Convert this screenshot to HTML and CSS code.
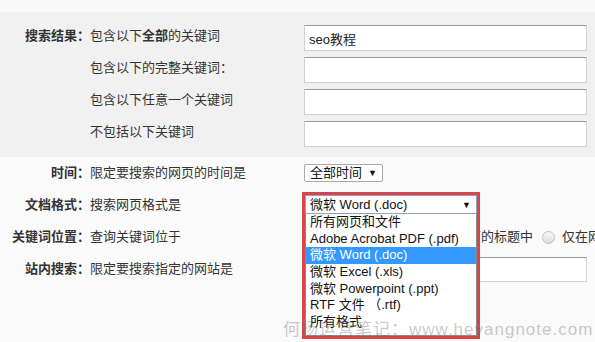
FILE: index.html
```html
<!DOCTYPE html>
<html lang="zh-CN">
<head>
    <meta charset="UTF-8">
    <meta name="viewport" content="width=device-width, initial-scale=1.0">
    <title>高级搜索</title>
    <link rel="stylesheet" href="styles.css">
</head>
<body>
    <div class="page">
        <div class="band"></div>

        <!-- keyword rows -->
        <div class="group">
            <div class="row">
                <div class="label">搜索结果：</div>
                <div class="desc">包含以下<b>全部</b>的关键词</div>
                <input class="text" type="text" value="seo教程">
            </div>
            <div class="row">
                <div class="label"></div>
                <div class="desc">包含以下的完整关键词：</div>
                <input class="text" type="text">
            </div>
            <div class="row">
                <div class="label"></div>
                <div class="desc">包含以下任意一个关键词</div>
                <input class="text" type="text">
            </div>
            <div class="row">
                <div class="label"></div>
                <div class="desc">不包括以下关键词</div>
                <input class="text" type="text">
            </div>
        </div>

        <!-- filter rows -->
        <div class="group plain">
            <div class="row">
                <div class="label">时间：</div>
                <div class="desc">限定要搜索的网页的时间是</div>
                <div class="field">
                    <span class="pick">全部时间 <i>▼</i></span>
                </div>
            </div>
            <div class="row">
                <div class="label">文档格式：</div>
                <div class="desc">搜索网页格式是</div>
                <div class="field">
                    <div class="dropdown">
                        <div class="combo">微软 Word (.doc) <i>▼</i></div>
                        <ul class="list">
                            <li>所有网页和文件</li>
                            <li>Adobe Acrobat PDF (.pdf)</li>
                            <li class="on">微软 Word (.doc)</li>
                            <li>微软 Excel (.xls)</li>
                            <li>微软 Powerpoint (.ppt)</li>
                            <li>RTF 文件 （.rtf)</li>
                            <li>所有格式</li>
                        </ul>
                    </div>
                </div>
            </div>
            <div class="row">
                <div class="label">关键词位置：</div>
                <div class="desc">查询关键词位于</div>
                <div class="field radios">
                    <span class="radio"></span><span class="opt-a">网页的任何地方</span>
                    <span class="radio"></span><span class="opt-b">仅网页的标题中</span>
                    <span class="radio"></span><span>仅在网页的URL中</span>
                </div>
            </div>
            <div class="row">
                <div class="label">站内搜索：</div>
                <div class="desc">限定要搜索指定的网站是</div>
                <input class="text site" type="text">
            </div>
        </div>

        <div class="mark">何杨运营笔记：www.heyangnote.com</div>
    </div>
</body>
</html>
```
FILE: styles.css
```css
body {
    margin: 0;
    background: #fafafa;
    font-family: "Liberation Sans", "Noto Sans CJK SC", sans-serif;
    font-size: 13px;
    line-height: 18px;
    color: #333;
}
.page {
    position: relative;
    width: 595px;
    height: 342px;
    overflow: hidden;
}
.band {
    height: 12px;
    background: #f8f8f8;
}
.group {
    display: flex;
    flex-direction: column;
    gap: 6px;
    padding: 13px 8px 10px 0;
    background: #f1f1f1;
}
.row {
    display: flex;
    align-items: flex-start;
}
.label {
    width: 90px;
    flex: none;
    text-align: right;
    font-weight: bold;
    padding-top: 2px;
}
.desc {
    width: 214px;
    flex: none;
    padding-top: 2px;
}
.desc b {
    font-weight: bold;
}
.text {
    width: 283px;
    height: 26px;
    box-sizing: border-box;
    margin: 0;
    padding: 0 4px;
    border: 1px solid #d0d0d0;
    border-top-color: #9a9a9a;
    background: #fff;
    font: inherit;
    color: #222;
    outline: none;
}
.group.plain {
    gap: 0;
    padding: 0;
    background: transparent;
}
.plain .row {
    height: 32px;
    align-items: center;
}
.plain .label,
.plain .desc {
    padding-top: 0;
}
.field {
    position: relative;
    flex: 1;
    align-self: stretch;
    display: flex;
    align-items: center;
    min-width: 0;
}
.pick {
    display: inline-flex;
    align-items: center;
    gap: 6px;
    height: 18px;
    box-sizing: border-box;
    padding: 0 5px;
    border: 1px solid #a9a9a9;
    border-radius: 2px;
    background: #fff;
    color: #111;
}
.pick i,
.combo i {
    font-style: normal;
    font-size: 9px;
}
.radios {
    white-space: nowrap;
    overflow: hidden;
}
.radio {
    flex: none;
    width: 13px;
    height: 13px;
    box-sizing: border-box;
    margin-right: 7px;
    border: 1px solid #c2c2c2;
    border-radius: 50%;
    background: linear-gradient(#fafafa, #dcdcdc);
}
.radio:first-child {
    margin-right: 3px;
}
.opt-a {
    margin-right: 15px;
}
.opt-b {
    margin-right: 9px;
}
.radios .radio:nth-child(3) {
    margin-right: 3px;
}
.site {
    height: 25px;
}
.dropdown {
    position: absolute;
    left: -2px;
    top: 3px;
    width: 178px;
    height: 147px;
    box-sizing: border-box;
    border: 3px solid #d9434a;
    background: #fff;
    z-index: 2;
}
.combo {
    display: flex;
    justify-content: space-between;
    align-items: center;
    height: 19px;
    box-sizing: border-box;
    padding: 0 5px 0 4px;
    border: 1px solid #8da2c0;
    color: #111;
}
.list {
    list-style: none;
    margin: 0;
    padding: 0;
    height: 122px;
    box-sizing: border-box;
    border: 1px solid #8a8a8a;
    border-top: none;
}
.list li {
    height: 16.66px;
    line-height: 16.66px;
    padding-left: 4px;
    color: #111;
    white-space: nowrap;
}
.list li.on {
    background: #3399ff;
    color: #fff;
}
.mark {
    position: absolute;
    left: 283px;
    top: 320px;
    font-size: 17px;
    line-height: 20px;
    letter-spacing: 1px;
    white-space: nowrap;
    color: rgba(110, 110, 110, 0.38);
    z-index: 3;
}
```
